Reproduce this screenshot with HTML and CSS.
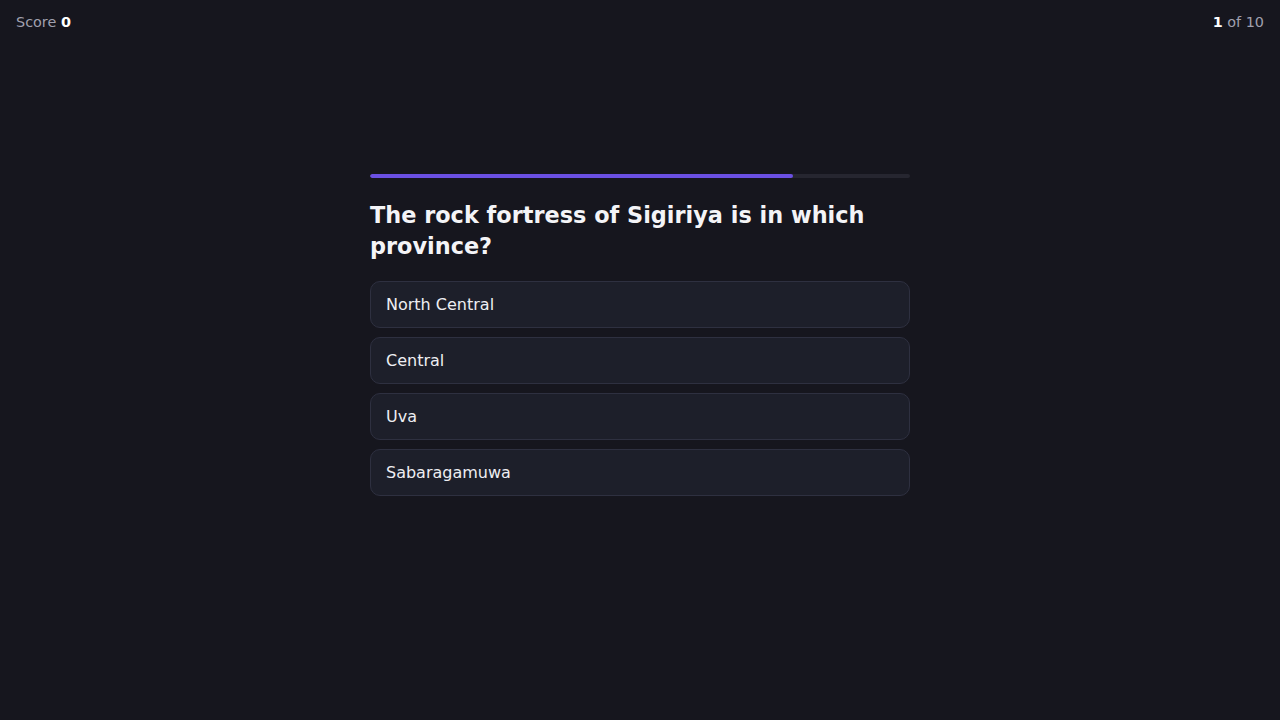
FILE: index.html
```html
<!DOCTYPE html>
<html>
<head>
<meta charset="utf-8">
<link rel="stylesheet" href="styles.css">
</head>
<body>
<header class="topbar">
  <div class="score">Score <b>0</b></div>
  <div class="count"><b>1</b> of 10</div>
</header>
<main class="quiz">
  <div class="progress"><div class="progress-fill" style="width:78.4%"></div></div>
  <h1 class="question">The rock fortress of Sigiriya is in which province?</h1>
  <div class="options">
    <button class="option">North Central</button>
    <button class="option">Central</button>
    <button class="option">Uva</button>
    <button class="option">Sabaragamuwa</button>
  </div>
</main>
</body>
</html>
```
FILE: styles.css
```css
html, body {
  margin: 0;
  padding: 0;
  height: 100%;
}
body {
  background: #16161e;
  color: #f1f1f4;
  font-family: "DejaVu Sans", sans-serif;
}
.topbar {
  display: flex;
  justify-content: space-between;
  align-items: center;
  height: 44px;
  padding: 0 16px;
  font-size: 14.4px;
  color: #a0a0ae;
}
.topbar b {
  color: #ffffff;
  font-weight: bold;
}
.quiz {
  width: 540px;
  margin: 130px auto 0;
}
.progress {
  height: 4px;
  border-radius: 2px;
  background: #262630;
  overflow: hidden;
}
.progress-fill {
  height: 100%;
  background: #6b50e3;
  border-radius: 2px;
}
.question {
  font-size: 22.4px;
  line-height: 31.4px;
  font-weight: bold;
  margin: 22px 0 18px;
  color: #f4f4f7;
}
.options {
  display: flex;
  flex-direction: column;
  gap: 9px;
}
.option {
  display: block;
  width: 100%;
  text-align: left;
  font-family: "DejaVu Sans", sans-serif;
  font-size: 16px;
  line-height: 23px;
  padding: 11px 15px;
  background: #1d1f2a;
  color: #eeeef2;
  border: 1px solid #2e3040;
  border-radius: 10px;
}
```
